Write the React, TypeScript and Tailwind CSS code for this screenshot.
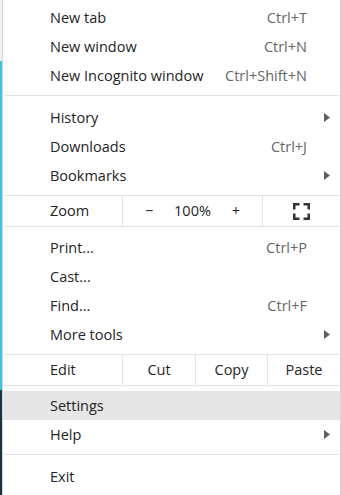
import React from "react";

type ItemProps = {
  label: string;
  shortcut?: string;
  submenu?: boolean;
  active?: boolean;
};

function Arrow() {
  return (
    <svg width="6" height="9" viewBox="0 0 6 9" className="mr-[10px] shrink-0">
      <polygon points="0,0 6,4.5 0,9" fill="#5f5f5f" />
    </svg>
  );
}

function Item({ label, shortcut, submenu, active }: ItemProps) {
  return (
    <div className={`flex h-[29px] items-center pl-[47px] ${active ? "bg-[#e6e6e6]" : ""}`}>
      <span className="flex-1">{label}</span>
      {shortcut && <span className="pr-[33px] text-[#666666]">{shortcut}</span>}
      {submenu && <Arrow />}
    </div>
  );
}

function Separator() {
  return (
    <div className="pt-[5px] pb-[7px]">
      <div className="mx-px h-px bg-[#e3e3e3]" />
    </div>
  );
}

function FullscreenIcon() {
  return (
    <svg width="17" height="17" viewBox="0 0 17 17" fill="none" stroke="#333333" strokeWidth="2.5">
      <path d="M1.25 6.5V1.25H6.5" />
      <path d="M10.5 1.25H15.75V6.5" />
      <path d="M15.75 10.5V15.75H10.5" />
      <path d="M6.5 15.75H1.25V10.5" />
    </svg>
  );
}

export default function App() {
  return (
    <div className="flex h-[495px] w-[341px] overflow-hidden bg-white font-['Open_Sans',sans-serif] text-[14.5px] text-[#242424]">
      {/* browser window edge peeking out behind the menu */}
      <div className="flex w-[2px] flex-col">
        <div className="h-[61px] bg-[#f2f2f2]" />
        <div className="h-[329px] bg-[#35c4ef]" />
        <div className="flex-1 bg-[#1c3341]" />
      </div>

      <div className="flex flex-1 flex-col border-x border-[#d6d6d6] pt-[3px]">
        <Item label="New tab" shortcut="Ctrl+T" />
        <Item label="New window" shortcut="Ctrl+N" />
        <Item label="New Incognito window" shortcut="Ctrl+Shift+N" />
        <Separator />
        <Item label="History" submenu />
        <Item label="Downloads" shortcut="Ctrl+J" />
        <Item label="Bookmarks" submenu />

        <div className="pt-[5px] pb-[6px]">
          <div className="mx-px h-px bg-[#e3e3e3]" />
          <div className="flex h-[30px] items-center">
            <div className="w-[119px] pl-[47px]">Zoom</div>
            <div className="h-full w-px bg-[#e3e3e3]" />
            <div className="flex w-[139px] items-center justify-between px-[22px]">
              <span>−</span>
              <span>100%</span>
              <span>+</span>
            </div>
            <div className="h-full w-px bg-[#e3e3e3]" />
            <div className="flex flex-1 items-center justify-center">
              <FullscreenIcon />
            </div>
          </div>
          <div className="mx-px h-px bg-[#e3e3e3]" />
        </div>

        <Item label="Print..." shortcut="Ctrl+P" />
        <Item label="Cast..." />
        <Item label="Find..." shortcut="Ctrl+F" />
        <Item label="More tools" submenu />

        <div className="pt-[5px] pb-[5px]">
          <div className="mx-px h-px bg-[#e3e3e3]" />
          <div className="flex h-[30px] items-center">
            <div className="w-[119px] pl-[47px]">Edit</div>
            <div className="h-full w-px bg-[#e3e3e3]" />
            <div className="w-[72px] text-center">Cut</div>
            <div className="h-full w-px bg-[#e3e3e3]" />
            <div className="w-[71px] text-center">Copy</div>
            <div className="h-full w-px bg-[#e3e3e3]" />
            <div className="flex-1 text-center">Paste</div>
          </div>
          <div className="mx-px h-px bg-[#e3e3e3]" />
        </div>

        <Item label="Settings" active />
        <Item label="Help" submenu />
        <Separator />
        <Item label="Exit" />
      </div>
    </div>
  );
}
